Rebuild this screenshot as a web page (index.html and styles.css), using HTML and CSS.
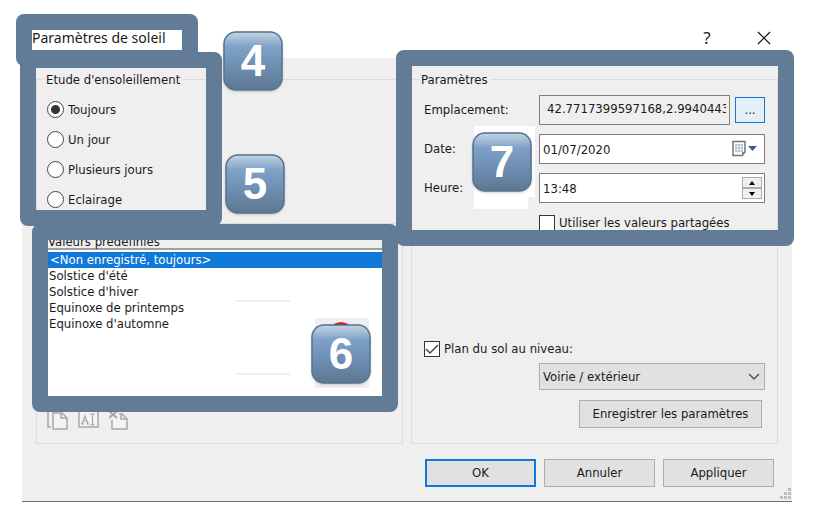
FILE: index.html
```html
<!DOCTYPE html>
<html lang="fr">
<head>
<meta charset="utf-8">
<title>Paramètres de soleil</title>
<link rel="stylesheet" href="styles.css">
</head>
<body>
<svg class="defs" aria-hidden="true">
  <defs>
    <linearGradient id="face" x1="0" y1="0" x2="0" y2="1">
      <stop offset="0" stop-color="#c3d5e4"/>
      <stop offset="0.1" stop-color="#a9c1d8"/>
      <stop offset="0.25" stop-color="#80a2c8"/>
      <stop offset="0.5" stop-color="#7294b9"/>
      <stop offset="1" stop-color="#5c7790"/>
    </linearGradient>
    <linearGradient id="edge" x1="0" y1="0" x2="0" y2="1">
      <stop offset="0" stop-color="#54718e"/>
      <stop offset="1" stop-color="#58738d"/>
    </linearGradient>
  </defs>
</svg>
<main class="dialog">
  <header class="titlebar">
    <h1 class="title">Paramètres de soleil</h1>
    <button class="title-button" type="button" aria-label="Aide">?</button>
    <button class="title-button" type="button" aria-label="Fermer">
      <svg width="14" height="14" viewBox="0 0 14 14"><path d="M1 1 13 13M13 1 1 13" stroke="#111" stroke-width="1.2" fill="none"/></svg>
    </button>
    <div class="frame frame-title"></div>
  </header>

  <form class="client">
    <div class="columns">
      <div class="column">
        <div class="panel">
          <fieldset class="group study">
            <legend>Etude d'ensoleillement</legend>
            <label class="choice"><input type="radio" name="study" checked>Toujours</label>
            <label class="choice"><input type="radio" name="study">Un jour</label>
            <label class="choice"><input type="radio" name="study">Plusieurs jours</label>
            <label class="choice"><input type="radio" name="study">Eclairage</label>
          </fieldset>
          <div class="frame frame-study"></div>
          <div class="badge badge-four"><svg viewBox="0 0 60 60"><rect x="1" y="1" width="58" height="58" rx="12" fill="url(#face)" stroke="url(#edge)" stroke-width="1.500"/></svg><span>4</span></div>
          <div class="badge badge-five"><svg viewBox="0 0 60 60"><rect x="1" y="1" width="58" height="58" rx="12" fill="url(#face)" stroke="url(#edge)" stroke-width="1.500"/></svg><span>5</span></div>
        </div>

        <section class="presets">
          <h2 class="presets-title" id="presets">Valeurs prédéfinies</h2>
          <ul class="list" role="listbox" aria-labelledby="presets">
            <li class="selected" role="option" aria-selected="true">&lt;Non enregistré, toujours&gt;</li>
            <li role="option">Solstice d'été</li>
            <li role="option">Solstice d'hiver</li>
            <li role="option">Equinoxe de printemps</li>
            <li role="option">Equinoxe d'automne</li>
          </ul>
          <div class="tools">
            <button type="button" aria-label="Dupliquer"><svg width="22" height="22" viewBox="0 0 22 22" fill="none" stroke="#a8a8a8" stroke-width="1.5"><path d="M4 17H1V1H7"/><path d="M6 3H15L20 8V19H6Z" fill="#f4f4f4"/><path d="M14 3V8H20"/></svg></button>
            <button type="button" aria-label="Renommer"><svg width="22" height="22" viewBox="0 0 22 22" fill="none" stroke="#a8a8a8" stroke-width="1.5"><path d="M1 1H20V17H1Z" fill="#f4f4f4"/><path d="M3 14H6M8 14H11M4 14 7 6 10 14M5 11H9M12 4H17M12 15H17M14.500 4V15" stroke-width="1.200"/></svg></button>
            <button type="button" aria-label="Supprimer"><svg width="22" height="22" viewBox="0 0 22 22" fill="none" stroke="#a8a8a8" stroke-width="1.5"><path d="M3 10V19H18V9L13 4H10" fill="#f4f4f4"/><path d="M12 4V9H18"/><path d="M0 1 8 8M8 1 0 8" stroke-width="2"/></svg></button>
          </div>
          <div class="rule rule-upper"></div>
          <div class="rule rule-lower"></div>
          <div class="frame frame-presets"></div>
          <div class="patch patch-six"></div>
          <div class="badge badge-six"><svg viewBox="0 0 60 60"><rect x="1" y="1" width="58" height="58" rx="12" fill="url(#face)" stroke="url(#edge)" stroke-width="1.500"/></svg><span>6</span></div>
        </section>
      </div>

      <div class="panel">
        <fieldset class="group settings">
          <legend>Paramètres</legend>
          <div class="fields">
            <label for="place">Emplacement:</label>
            <div class="place">
              <input class="field field-readonly" id="place" type="text" readonly value="42.7717399597168,2.9940443">
              <button class="browse" type="button" aria-label="Parcourir">...</button>
            </div>
            <label for="date">Date:</label>
            <div class="combo">
              <input class="field" id="date" type="text" value="01/07/2020">
              <button class="calendar" type="button" aria-label="Calendrier"><svg width="28" height="18" viewBox="0 0 28 18"><path d="M2 1.500H14V12L11 15.500H2Z" fill="#fff" stroke="#777071" stroke-width="1.500"/><path d="M14 12H11V15.500Z" fill="#857f80"/><path d="M4 4H12V12H4Z" fill="#b5c1d2"/><path d="M4 6.500H12M4 9.500H12M6.500 4V12M9.500 4V12" stroke="#fff" stroke-width="0.600"/><path d="M17 6H26L21.500 11Z" fill="#3d5c92"/></svg></button>
            </div>
            <label for="time">Heure:</label>
            <div class="combo">
              <input class="field" id="time" type="text" value="13:48">
              <div class="spinner">
                <button type="button" aria-label="Augmenter"><svg width="8" height="4" viewBox="0 0 8 4"><path d="M1 4 4 0 7 4Z"/></svg></button>
                <button type="button" aria-label="Diminuer"><svg width="8" height="4" viewBox="0 0 8 4"><path d="M1 0 4 4 7 0Z"/></svg></button>
              </div>
            </div>
            <label class="check shared"><input type="checkbox">Utiliser les valeurs partagées</label>
          </div>
          <label class="check ground"><input type="checkbox" checked>Plan du sol au niveau:</label>
          <div class="level">
            <select aria-label="Niveau"><option>Voirie / extérieur</option></select>
            <svg class="chevron" width="12" height="8" viewBox="0 0 12 8"><path d="M1 1 6 6 11 1" fill="none" stroke="#555" stroke-width="1.500"/></svg>
          </div>
          <button class="button save" type="button">Enregistrer les paramètres</button>
        </fieldset>
        <div class="patch patch-seven"></div>
        <div class="patch patch-seven-low"></div>
        <div class="frame frame-settings"></div>
        <div class="badge badge-seven"><svg viewBox="0 0 60 60"><rect x="1" y="1" width="58" height="58" rx="12" fill="url(#face)" stroke="url(#edge)" stroke-width="1.500"/></svg><span>7</span></div>
      </div>
    </div>
    <footer class="actions">
      <button class="button primary" type="button">OK</button>
      <button class="button" type="button">Annuler</button>
      <button class="button" type="button">Appliquer</button>
    </footer>
    <svg class="grip" width="11" height="11" viewBox="0 0 11 11" fill="#bdbdbd"><path d="M8 0h3v3h-3zM4 4h3v3h-3zM8 4h3v3h-3zM0 8h3v3h-3zM4 8h3v3h-3zM8 8h3v3h-3z"/></svg>
  </form>
</main>
</body>
</html>
```

FILE: styles.css
```css
* { box-sizing: border-box; }

body {
  margin: 0;
  background: #fff;
  color: #1a1a1a;
  font: 13px/18px "DejaVu Sans Condensed", "DejaVu Sans", sans-serif;
}

button, input, select {
  margin: 0;
  padding: 0;
  color: inherit;
  font: inherit;
}

button { border: 0; background: none; }
svg { display: block; }
.defs { position: absolute; width: 0; height: 0; }
.dialog { margin: 0 24px 0 22px; }

/* Title bar */
.titlebar {
  position: relative;
  display: flex;
  align-items: center;
  height: 58px;
  padding: 18px 20px 0 10px;
}
.title {
  flex: 1;
  margin: 0;
  font: 14px/20px "Noto Sans", sans-serif;
}
.title-button {
  display: grid;
  place-items: center;
  width: 16px;
  margin-left: 41px;
  font: 17px/18px "Noto Sans", sans-serif;
}

/* Client area */
.client {
  position: relative;
  padding: 12px 14px 14px;
  border-bottom: 1px solid #707070;
  background: #efefef;
}
.columns {
  display: grid;
  grid-template-columns: 1fr 1fr;
  gap: 8px;
}
.panel { position: relative; }
.group {
  min-width: 0;
  margin: 0;
  border: 1px solid #dcdcdc;
}
.group legend {
  height: 18px;
  padding: 1px 3px 0 2px;
}
.study { padding: 6px 10px 9px; }
.study legend { margin-left: -3px; }
.choice {
  display: flex;
  align-items: center;
  gap: 4px;
  height: 30px;
  padding-top: 1px;
}
.choice input {
  appearance: none;
  width: 17px;
  height: 17px;
  border: 1px solid #444;
  border-radius: 50%;
  background: #fff;
}
.choice input:checked {
  background: radial-gradient(circle, #333 4px, #fff 5px);
}

/* Presets */
.presets {
  position: relative;
  height: 209px;
  margin-top: 11px;
  border: 1px solid #dcdcdc;
}
.presets-title {
  height: 12px;
  margin: 0 0 0 11px;
  font: inherit;
  line-height: 12px;
}
.list {
  height: 156px;
  margin: 0 11px;
  padding: 2px 0;
  border-top: 2px solid #9d9fa1;
  background: #fff;
  list-style: none;
}
.list li { padding-left: 1px; line-height: 16px; }
.list .selected { padding-left: 2px; background: #0f78d9; color: #fff; }
.tools {
  display: flex;
  gap: 9px;
  padding: 6px 10px;
}
.rule {
  position: absolute;
  left: 198px;
  width: 55px;
  height: 2px;
  background: #efefef;
}
.rule-upper { top: 64px; }
.rule-lower { top: 137px; }

/* Settings */
.settings { padding: 7px 12px 15px; }
.settings legend { margin-left: -5px; }
.fields {
  display: grid;
  grid-template-columns: 115px 1fr;
  row-gap: 9px;
  align-items: center;
}
.place { display: flex; align-items: center; gap: 5px; }
.field {
  display: block;
  width: 100%;
  min-width: 0;
  height: 30px;
  padding: 0 3px;
  border: 1px solid #7f7f7f;
  border-radius: 0;
  background: #fff;
}
.field-readonly {
  flex: 1;
  padding: 0 3px 4px 7px;
  background: #efefef;
}
.browse {
  width: 30px;
  height: 26px;
  border: 1px solid #0f78d9;
  background: #e3f0fa;
}
.combo { position: relative; }
.calendar { position: absolute; top: 6px; right: 6px; }
.spinner {
  position: absolute;
  top: 4px;
  right: 3px;
  display: grid;
  width: 20px;
}
.spinner button {
  display: grid;
  place-items: center;
  height: 11px;
  border: 1px solid #acacac;
  background: #efefef;
}
.check { display: flex; align-items: center; gap: 4px; }
.check input {
  appearance: none;
  width: 16px;
  height: 16px;
  border: 1px solid #333;
  background: #fff;
}
.check input:checked {
  background: #fff url("data:image/svg+xml,%3Csvg xmlns='http://www.w3.org/2000/svg' viewBox='0 0 14 14'%3E%3Cpath d='M1 7 5 11 13 3' fill='none' stroke='%23444' stroke-width='1.5'/%3E%3C/svg%3E");
}
.shared { grid-column: 2; padding-top: 2px; }
.ground { margin-top: 108px; }
.level { position: relative; margin: 5px 0 10px 115px; }
.level select {
  display: block;
  appearance: none;
  width: 100%;
  height: 27px;
  padding-left: 3px;
  border: 1px solid #adadad;
  border-radius: 0;
  background: #e1e1e1;
}
.chevron { position: absolute; top: 10px; right: 5px; }
.button {
  height: 28px;
  border: 1px solid #adadad;
  background: #e1e1e1;
}
.save { display: block; width: 183px; margin: 0 3px 0 auto; }
.actions {
  display: grid;
  grid-template-columns: 111px 111px 111px;
  justify-content: end;
  gap: 8px;
  padding: 15px 4px 0 0;
}
.primary { border: 2px solid #0f78d9; }
.grip { position: absolute; right: 1px; bottom: 2px; }

/* Annotations */
.frame {
  position: absolute;
  z-index: 2;
  border: 16px solid #627c98;
  border-radius: 8px;
  pointer-events: none;
}
.frame-title { top: 14px; left: -6px; width: 182px; height: 52px; }
.frame-study { top: -18px; left: -16px; width: 202px; height: 174px; }
.frame-presets { top: -12px; right: 4px; left: -5px; height: 188px; }
.frame-settings { top: -20px; right: -16px; left: -15px; height: 196px; }
.badge {
  position: absolute;
  z-index: 3;
  width: 60px;
  height: 60px;
  color: #fff;
  font: bold 44px/60px "Liberation Sans", sans-serif;
  text-align: center;
}
.badge svg { position: absolute; filter: drop-shadow(0 1px 1px #8886); }
.badge span { position: relative; }
.badge-four { top: -39px; left: 187px; }
.badge-five { top: 84px; left: 189px; }
.badge-six { top: 88px; left: 274px; }
.badge-seven { top: 62px; left: 61px; }
.patch { position: absolute; background: #fff; }
.patch-six {
  top: 82px;
  left: 278px;
  width: 54px;
  height: 70px;
  background: radial-gradient(ellipse 8px 3px at 26px 7px, #e01818 80%, #efefef);
}
.patch-seven { top: 56px; left: 63px; width: 61px; height: 71px; }
.patch-seven-low { top: 127px; left: 63px; width: 54px; height: 12px; }
```
